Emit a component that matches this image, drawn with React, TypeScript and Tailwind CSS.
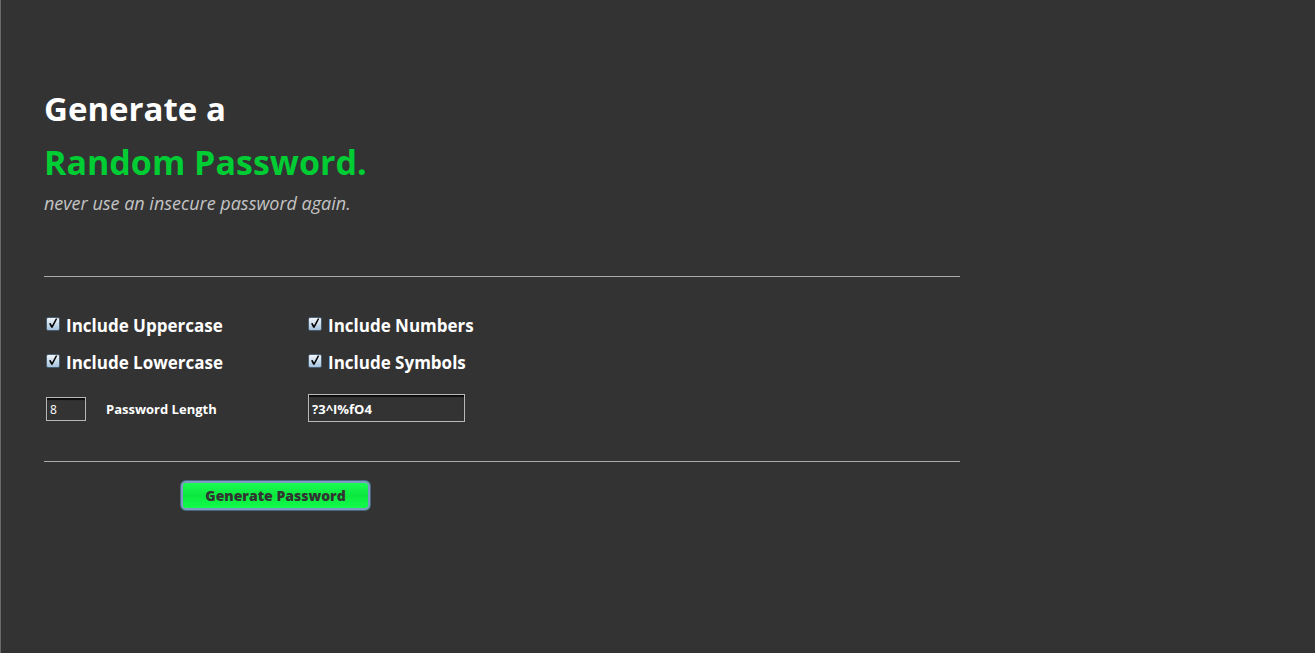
import { useState } from "react";

type OptionProps = {
  id: string;
  label: string;
  checked: boolean;
  onChange: (checked: boolean) => void;
};

function Option({ id, label, checked, onChange }: OptionProps) {
  return (
    <label htmlFor={id} className="flex h-6 items-center gap-1.5 text-[17px] leading-6 font-bold text-white">
      <span className="relative mb-1 flex size-3.5 shrink-0">
        <input
          id={id}
          type="checkbox"
          checked={checked}
          onChange={(e) => onChange(e.target.checked)}
          className="peer size-3.5 appearance-none rounded-xs border border-[#4b5f72] bg-linear-to-b from-[#f0f5fa] to-[#a5c3dc]"
        />
        <svg
          viewBox="0 0 14 14"
          className="pointer-events-none absolute inset-0 size-3.5 opacity-0 peer-checked:opacity-100"
          aria-hidden="true"
        >
          <path d="M3 6.4 4.6 6 6 8.4 9.8 1.6 11.4 1.6 6.6 10.8 5.2 10.8Z" fill="#000" />
        </svg>
      </span>
      {label}
    </label>
  );
}

const CHARSETS = {
  uppercase: "ABCDEFGHIJKLMNOPQRSTUVWXYZ",
  lowercase: "abcdefghijklmnopqrstuvwxyz",
  numbers: "0123456789",
  symbols: "!?@#$%^&*+-=",
};

type Kind = keyof typeof CHARSETS;

const OPTIONS: { kind: Kind; label: string }[] = [
  { kind: "uppercase", label: "Include Uppercase" },
  { kind: "numbers", label: "Include Numbers" },
  { kind: "lowercase", label: "Include Lowercase" },
  { kind: "symbols", label: "Include Symbols" },
];

export default function App() {
  const [enabled, setEnabled] = useState<Record<Kind, boolean>>({
    uppercase: true,
    lowercase: true,
    numbers: true,
    symbols: true,
  });
  const [length, setLength] = useState("8");
  const [password, setPassword] = useState("?3^I%fO4");

  const generate = () => {
    const pool = OPTIONS.filter((o) => enabled[o.kind])
      .map((o) => CHARSETS[o.kind])
      .join("");
    const count = Number(length) || 0;
    setPassword(
      pool ? Array.from({ length: count }, () => pool[Math.floor(Math.random() * pool.length)]).join("") : "",
    );
  };

  return (
    <main className="min-h-screen border-l border-[#6a6a6a] bg-[#333333] px-[43px] pt-[82px] pb-16 font-['Open_Sans','Noto_Sans',sans-serif]">
      <div className="max-w-[916px]">
        <header className="border-b border-[#a9a9b0] pb-[61px]">
          <h1 className="text-[33px] leading-[54px] font-bold text-white">
            Generate a
            <span className="block text-[34px] leading-[52px] text-[#00cc33]">Random Password.</span>
          </h1>
          <p className="mt-[3px] text-[18px] leading-6 text-[#c4c4c4] italic">
            never use an insecure password again.
          </p>
        </header>

        <section className="border-b border-[#a9a9b0] pt-[37px] pb-[39px] pl-0.5">
          <div className="grid grid-cols-[262px_1fr] gap-y-[13px]">
            {OPTIONS.map(({ kind, label }) => (
              <Option
                key={kind}
                id={kind}
                label={label}
                checked={enabled[kind]}
                onChange={(checked) => setEnabled({ ...enabled, [kind]: checked })}
              />
            ))}
          </div>
          <div className="mt-[19px] grid grid-cols-[262px_1fr] items-end">
            <div className="flex items-center gap-5 pb-px">
              <input
                id="length"
                type="text"
                value={length}
                onChange={(e) => setLength(e.target.value)}
                className="h-6 w-10 border border-[#b8b8b8] px-[3px] text-[12px] text-white inset-shadow-[0_2px_1px_#0a0a0a] outline-none"
              />
              <label htmlFor="length" className="text-[13px] leading-5 font-bold text-white">
                Password Length
              </label>
            </div>
            <input
              type="text"
              aria-label="Generated password"
              readOnly
              value={password}
              className="h-7 w-[157px] border border-[#b8b8b8] px-[3px] pt-0.5 text-[13px] font-bold text-white inset-shadow-[0_2px_1px_#0a0a0a] outline-none"
            />
          </div>
        </section>

        <button
          type="button"
          onClick={generate}
          className="mt-[18px] ml-[136px] h-[31px] w-[191px] rounded-md border border-[#4a6484] bg-linear-to-b from-[#1cff55] via-[#0be83e] to-[#14ff4e] text-[14px] font-extrabold text-[#333333] inset-shadow-[0_0_0_2px_#7d9cc4]"
        >
          Generate Password
        </button>
      </div>
    </main>
  );
}
